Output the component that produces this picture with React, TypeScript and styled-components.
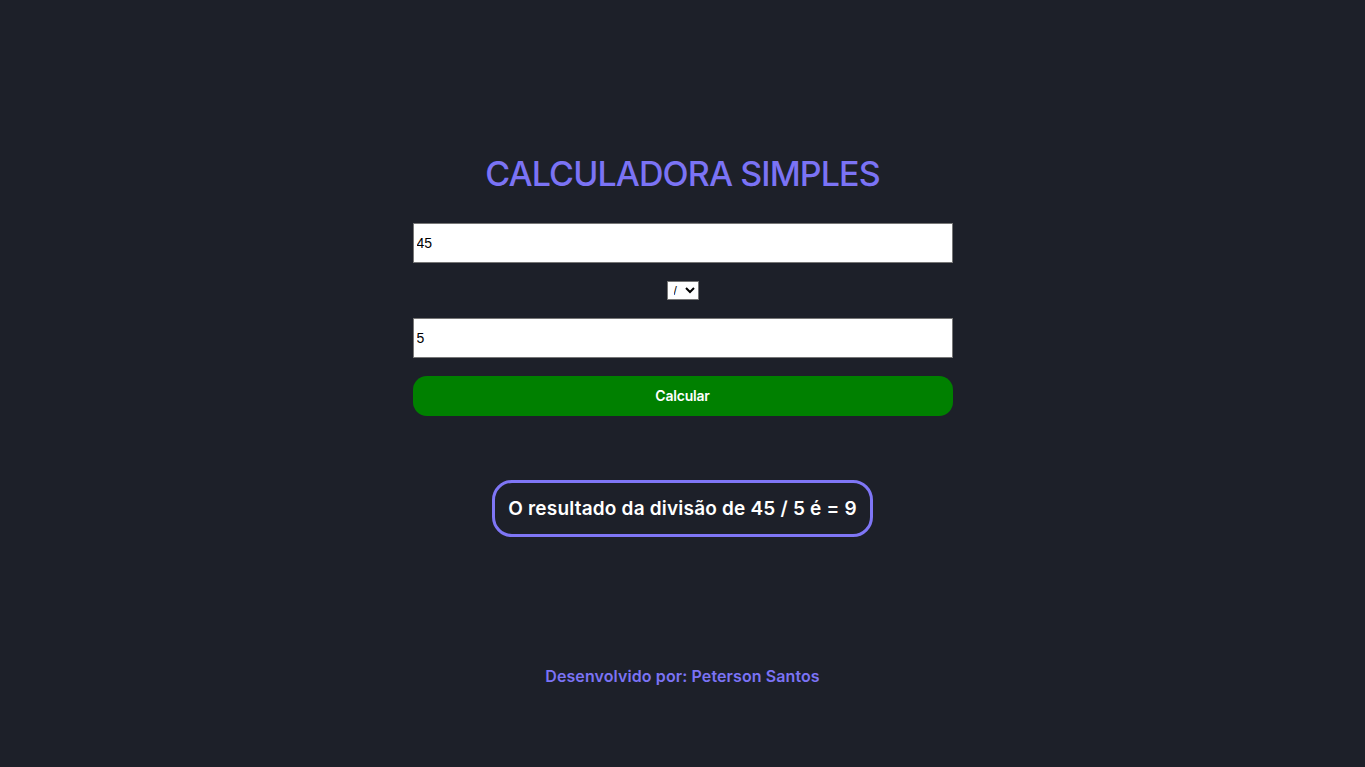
import React, { useState } from "react";
import styled, { createGlobalStyle } from "styled-components";

const Global = createGlobalStyle`
  html, body { margin: 0; padding: 0; background: #1d2029; }
  body { font-family: "Inter", "Noto Sans", sans-serif; }
`;

const Page = styled.div`
  min-height: 767px;
  display: flex;
  flex-direction: column;
  align-items: center;
  background: #1d2029;
`;

const Title = styled.h1`
  margin: 151px 0 0;
  font-size: 34px;
  line-height: 46px;
  font-weight: 500;
  letter-spacing: -0.9px;
  color: #7b73f5;
  text-transform: uppercase;
`;

const Form = styled.div`
  width: 540px;
  margin-top: 26px;
  display: flex;
  flex-direction: column;
  align-items: center;
`;

const NumberInput = styled.input`
  box-sizing: border-box;
  width: 540px;
  height: 40px;
  padding: 0 3px;
  border: 1px solid #767676;
  background: #fff;
  font-family: "Liberation Sans", Arial, sans-serif;
  font-size: 14px;
  color: #000;
  outline: none;
`;

const OpSelect = styled.select`
  box-sizing: border-box;
  margin: 18px 0 18px;
  width: 32px;
  height: 19px;
  padding: 0 0 0 2px;
  border: 1px solid #767676;
  border-radius: 0;
  background: #fff;
  font-family: "Liberation Sans", Arial, sans-serif;
  font-size: 12px;
  color: #000;
`;

const CalcButton = styled.button`
  box-sizing: border-box;
  width: 540px;
  height: 40px;
  margin-top: 18px;
  padding: 0 0 2px;
  border: none;
  border-radius: 14px;
  background: #008000;
  color: #fff;
  font-family: "Inter", "Noto Sans", sans-serif;
  font-size: 14px;
  font-weight: 600;
  letter-spacing: -0.2px;
  cursor: pointer;
`;

const Result = styled.div`
  margin-top: 64px;
  box-sizing: border-box;
  height: 57px;
  padding: 0 13px;
  display: flex;
  align-items: center;
  border: 3px solid #7f76f6;
  border-radius: 20px;
  color: #fff;
  font-size: 19px;
  font-weight: 600;
  letter-spacing: 0.2px;
`;

const Footer = styled.footer`
  margin-top: 129px;
  font-size: 16px;
  font-weight: 600;
  letter-spacing: 0.1px;
  color: #7b73f5;
`;

export default function App() {
  const [a, setA] = useState("45");
  const [b, setB] = useState("5");
  const [op, setOp] = useState("/");
  return (
    <>
      <Global />
      <Page>
        <Title>Calculadora Simples</Title>
        <Form>
          <NumberInput value={a} onChange={(e) => setA(e.target.value)} />
          <OpSelect value={op} onChange={(e) => setOp(e.target.value)}>
            <option value="+">+</option>
            <option value="-">-</option>
            <option value="*">*</option>
            <option value="/">/</option>
          </OpSelect>
          <NumberInput value={b} onChange={(e) => setB(e.target.value)} />
          <CalcButton>Calcular</CalcButton>
        </Form>
        <Result>O resultado da divisão de 45 / 5 é = 9</Result>
        <Footer>Desenvolvido por: Peterson Santos</Footer>
      </Page>
    </>
  );
}
